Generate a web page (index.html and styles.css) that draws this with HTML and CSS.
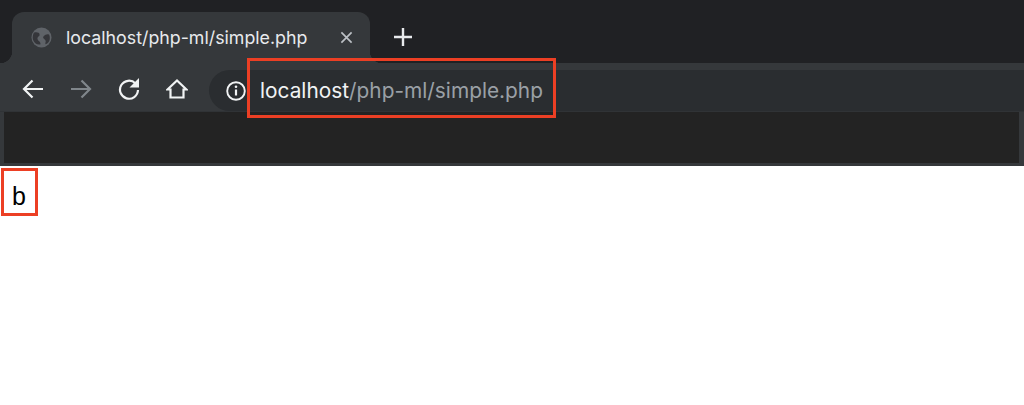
FILE: index.html
```html
<!DOCTYPE html>
<html lang="en">
<head>
    <meta charset="UTF-8">
    <meta name="viewport" content="width=device-width, initial-scale=1.0">
    <title>localhost/php-ml/simple.php</title>
    <link rel="stylesheet" href="styles.css">
</head>
<body>
    <header class="browser">
        <!-- Tabs -->
        <div class="tabstrip">
            <div class="tab">
                <svg class="favicon" viewBox="0 0 22 22">
                    <circle cx="11" cy="11" r="10.5" fill="#5f6368"/>
                    <path d="M3 6c3-1 6 0 6 2s-3 2-2 5c1 2 3 2 3 5-3 1-7-1-8-5-.5-2 0-5 1-7zM13 10c2-2 4-3 6-2 1 2 1 5 0 7-1 2-3 3-4 3 0-2 1-3 0-4-1-2-3-2-2-4z" fill="#35363a"/>
                </svg>
                <span class="tab-title">localhost/php-ml/simple.php</span>
                <svg class="tab-close" viewBox="0 0 14 14">
                    <path d="M1.5 1.5l11 11M12.5 1.5l-11 11" stroke="#bdc1c6" stroke-width="1.8" fill="none"/>
                </svg>
            </div>
            <svg class="new-tab" viewBox="0 0 18 18">
                <path d="M9 0v18M0 9h18" stroke="#e8eaed" stroke-width="2.4" fill="none"/>
            </svg>
        </div>

        <!-- Toolbar -->
        <div class="toolbar">
            <svg class="nav-icon" viewBox="0 0 22 22">
                <path d="M21 11H2M10.5 2.500L2 11l8.500 8.500" stroke="#f1f3f4" stroke-width="2.200" fill="none"/>
            </svg>
            <svg class="nav-icon disabled" viewBox="0 0 22 22">
                <path d="M1 11h19M11.500 2.500L20 11l-8.500 8.500" stroke="#80868b" stroke-width="2.200" fill="none"/>
            </svg>
            <svg class="nav-icon" viewBox="0 0 22 22">
                <path d="M17.500 5.500A9 9 0 1 0 20 12" stroke="#f1f3f4" stroke-width="2.200" fill="none"/>
                <path d="M21 0v9.500h-9.500z" fill="#f1f3f4"/>
            </svg>
            <svg class="nav-icon" viewBox="0 0 22 22">
                <path d="M1.500 11.500L11 2.500l9.500 9H17.500v8h-13v-8z" stroke="#f1f3f4" stroke-width="2.200" fill="none"/>
            </svg>
            <div class="omnibox">
                <svg class="info-icon" viewBox="0 0 20 20">
                    <circle cx="10" cy="10" r="8.800" stroke="#f1f3f4" stroke-width="1.900" fill="none"/>
                    <path d="M10 8.500v6" stroke="#f1f3f4" stroke-width="2.200"/>
                    <circle cx="10" cy="5.800" r="1.300" fill="#f1f3f4"/>
                </svg>
                <span class="url"><span class="host">localhost</span>/php-ml/simple.php</span>
            </div>
        </div>

        <!-- Empty bookmarks area -->
        <div class="bar-frame">
            <div class="bar-inner"></div>
        </div>
    </header>

    <main class="page">b</main>

    <!-- Red highlight boxes -->
    <div class="mark mark-url"></div>
    <div class="mark mark-b"></div>
</body>
</html>
```

FILE: styles.css
```css
body {
    margin: 0;
    padding: 0;
    height: 405px;
    overflow: hidden;
    position: relative;
    background-color: #fff;
    font-family: Inter, "Liberation Sans", Arial, sans-serif;
}
svg {
    display: block;
    flex-shrink: 0;
}
.browser {
    height: 166px;
    display: flex;
    flex-direction: column;
    background-color: #35383b;
}
.tabstrip {
    height: 63px;
    display: flex;
    align-items: flex-end;
    background-color: #202124;
}
.tab {
    position: relative;
    width: 358px;
    height: 51px;
    margin-left: 12px;
    display: flex;
    align-items: center;
    padding: 0 17px 0 19px;
    box-sizing: border-box;
    background-color: #35383b;
    border-radius: 12px 12px 0 0;
}
.tab::before,
.tab::after {
    content: "";
    position: absolute;
    bottom: 0;
    width: 12px;
    height: 12px;
}
.tab::before {
    left: -12px;
    background: radial-gradient(circle at 0 0, #202124 12px, #35383b 12.500px);
}
.tab::after {
    right: -12px;
    background: radial-gradient(circle at 100% 0, #202124 12px, #35383b 12.500px);
}
.favicon {
    width: 21px;
    height: 21px;
    margin-top: -1px;
}
.tab-title {
    margin-left: 14px;
    flex: 1;
    font-size: 17.800px;
    color: #e8eaed;
    white-space: nowrap;
}
.tab-close {
    width: 13px;
    height: 13px;
}
.new-tab {
    width: 18px;
    height: 18px;
    margin-left: 24px;
    margin-bottom: 17px;
}
.toolbar {
    height: 48px;
    display: flex;
    align-items: flex-end;
    padding-left: 22px;
    box-sizing: border-box;
}
.nav-icon {
    width: 22px;
    height: 22px;
    margin-right: 26px;
    margin-bottom: 11px;
}
.omnibox {
    flex: 1;
    height: 41px;
    margin-left: -5px;
    display: flex;
    align-items: center;
    padding-left: 17px;
    background-color: #2a2d30;
    border-radius: 21px 0 0 21px;
}
.info-icon {
    width: 20px;
    height: 20px;
}
.url {
    margin-left: 14px;
    font-size: 20.850px;
    color: #9aa0a6;
    white-space: nowrap;
}
.host {
    color: #f1f3f4;
}
.bar-frame {
    flex: 1;
    padding: 0 5px 3px 4px;
    display: flex;
    border-top: 1px solid #303336;
}
.bar-inner {
    flex: 1;
    background-color: #232323;
}
.page {
    padding: 17px 0 0 12px;
    font-family: "Liberation Sans", Arial, sans-serif;
    font-size: 25px;
    line-height: 26px;
    color: #000;
}
.mark {
    position: absolute;
    box-sizing: border-box;
    border: 3px solid #ec3f24;
}
.mark-url {
    left: 247px;
    top: 58px;
    width: 309px;
    height: 60px;
}
.mark-b {
    left: 1px;
    top: 168px;
    width: 37px;
    height: 48px;
}
```
